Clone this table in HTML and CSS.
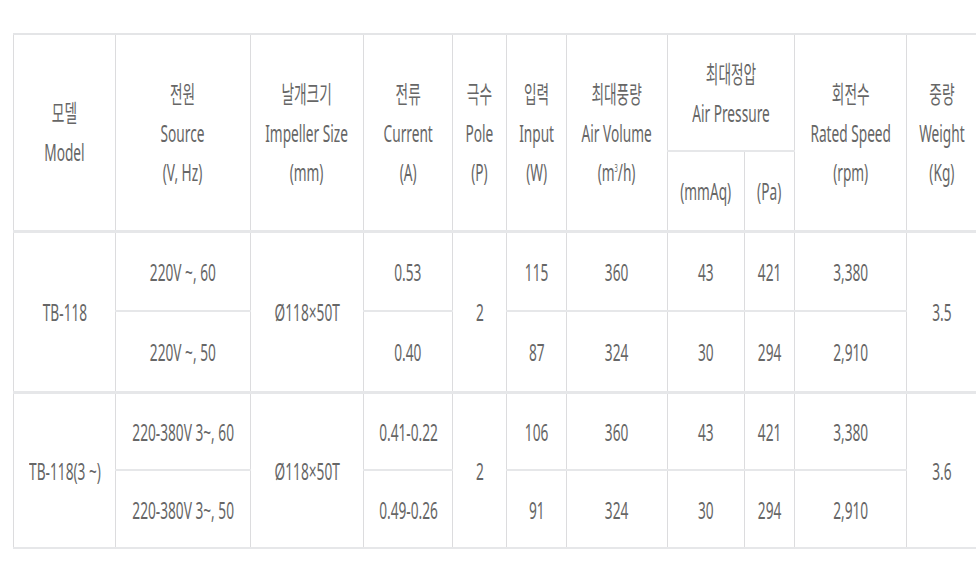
FILE: index.html
```html
<!DOCTYPE html>
<html lang="ko">
<head>
<meta charset="utf-8">
<title>TB-118 Spec</title>
<link rel="stylesheet" href="styles.css">
</head>
<body>
<table class="spec">
  <colgroup>
    <col class="w102"><col class="w135"><col class="w113"><col class="w89"><col class="w54"><col class="w60"><col class="w101"><col class="w77"><col class="w50"><col class="w112"><col class="w70">
  </colgroup>
  <thead>
    <tr class="h1">
      <th rowspan="2"><div class="c"><span class="t">모델<br>Model</span></div></th>
      <th rowspan="2"><div class="c"><span class="t">전원<br>Source<br>(V, Hz)</span></div></th>
      <th rowspan="2"><div class="c"><span class="t">날개크기<br>Impeller Size<br>(mm)</span></div></th>
      <th rowspan="2"><div class="c"><span class="t">전류<br>Current<br>(A)</span></div></th>
      <th rowspan="2"><div class="c"><span class="t">극수<br>Pole<br>(P)</span></div></th>
      <th rowspan="2"><div class="c"><span class="t">입력<br>Input<br>(W)</span></div></th>
      <th rowspan="2"><div class="c"><span class="t">최대풍량<br>Air Volume<br>(m<sup>3</sup>/h)</span></div></th>
      <th colspan="2"><div class="c"><span class="t">최대정압<br>Air Pressure</span></div></th>
      <th rowspan="2"><div class="c"><span class="t">회전수<br>Rated Speed<br>(rpm)</span></div></th>
      <th rowspan="2"><div class="c"><span class="t">중량<br>Weight<br>(Kg)</span></div></th>
    </tr>
    <tr class="h2">
      <th><div class="c"><span class="t">(mmAq)</span></div></th>
      <th><div class="c"><span class="t">(Pa)</span></div></th>
    </tr>
  </thead>
  <tbody class="g1">
    <tr class="r">
      <td rowspan="2"><div class="c"><span class="t">TB-118</span></div></td>
      <td><div class="c"><span class="t">220V ~, 60</span></div></td>
      <td rowspan="2"><div class="c"><span class="t">Ø118×50T</span></div></td>
      <td><div class="c"><span class="t">0.53</span></div></td>
      <td rowspan="2"><div class="c"><span class="t">2</span></div></td>
      <td><div class="c"><span class="t">115</span></div></td>
      <td><div class="c"><span class="t">360</span></div></td>
      <td><div class="c"><span class="t">43</span></div></td>
      <td><div class="c"><span class="t">421</span></div></td>
      <td><div class="c"><span class="t">3,380</span></div></td>
      <td rowspan="2"><div class="c"><span class="t">3.5</span></div></td>
    </tr>
    <tr class="r">
      <td><div class="c"><span class="t">220V ~, 50</span></div></td>
      <td><div class="c"><span class="t">0.40</span></div></td>
      <td><div class="c"><span class="t">87</span></div></td>
      <td><div class="c"><span class="t">324</span></div></td>
      <td><div class="c"><span class="t">30</span></div></td>
      <td><div class="c"><span class="t">294</span></div></td>
      <td><div class="c"><span class="t">2,910</span></div></td>
    </tr>
  </tbody>
  <tbody class="g2">
    <tr class="r">
      <td rowspan="2"><div class="c"><span class="t">TB-118(3 ~)</span></div></td>
      <td><div class="c"><span class="t">220-380V 3~, 60</span></div></td>
      <td rowspan="2"><div class="c"><span class="t">Ø118×50T</span></div></td>
      <td><div class="c"><span class="t">0.41-0.22</span></div></td>
      <td rowspan="2"><div class="c"><span class="t">2</span></div></td>
      <td><div class="c"><span class="t">106</span></div></td>
      <td><div class="c"><span class="t">360</span></div></td>
      <td><div class="c"><span class="t">43</span></div></td>
      <td><div class="c"><span class="t">421</span></div></td>
      <td><div class="c"><span class="t">3,380</span></div></td>
      <td rowspan="2"><div class="c"><span class="t">3.6</span></div></td>
    </tr>
    <tr class="r">
      <td><div class="c"><span class="t">220-380V 3~, 50</span></div></td>
      <td><div class="c"><span class="t">0.49-0.26</span></div></td>
      <td><div class="c"><span class="t">91</span></div></td>
      <td><div class="c"><span class="t">324</span></div></td>
      <td><div class="c"><span class="t">30</span></div></td>
      <td><div class="c"><span class="t">294</span></div></td>
      <td><div class="c"><span class="t">2,910</span></div></td>
    </tr>
  </tbody>
</table>
</body>
</html>
```

FILE: styles.css
```css
html, body {
  margin: 0;
  padding: 0;
  background: #fff;
  overflow: hidden;
}
body {
  padding: 33px 0 0 13px;
  font-family: "Noto Sans", "Noto Sans CJK KR", sans-serif;
  color: #666;
}
.spec {
  border-collapse: collapse;
  table-layout: fixed;
  width: 963px;
  border-top: 2px solid #e4e5e7;
  border-left: 1px solid #dcdcde;
}
.w102 { width: 102px; }
.w135 { width: 135px; }
.w113 { width: 113px; }
.w89 { width: 89px; }
.w54 { width: 54px; }
.w60 { width: 60px; }
.w101 { width: 101px; }
.w77 { width: 77px; }
.w50 { width: 50px; }
.w112 { width: 112px; }
.w70 { width: 70px; }
.spec th, .spec td {
  padding: 0;
  font-weight: normal;
  border-left: 1px solid #dcdcde;
  border-bottom: 2px solid #e6e7e9;
  vertical-align: middle;
  overflow: visible;
}
.spec thead tr.h2 th,
.spec thead th[rowspan] {
  border-bottom: 3px solid #e6e7e9;
}
.spec tbody + tbody tr:first-child td {
  border-top: 3px solid #e6e7e9;
}
.h1 { height: 117px; }
.h2 { height: 80px; }
.g1 .r { height: 80px; }
.g1 .r + .r { height: 81px; }
.g2 .r { height: 78px; }
.c {
  display: flex;
  justify-content: center;
  align-items: center;
}
.t {
  display: inline-block;
  white-space: nowrap;
  text-align: center;
  font-size: 24px;
  line-height: 39px;
  transform: scaleX(0.57);
  flex: none;
}
.t sup {
  font-size: 10px;
  line-height: 0;
  vertical-align: 9px;
}
```
